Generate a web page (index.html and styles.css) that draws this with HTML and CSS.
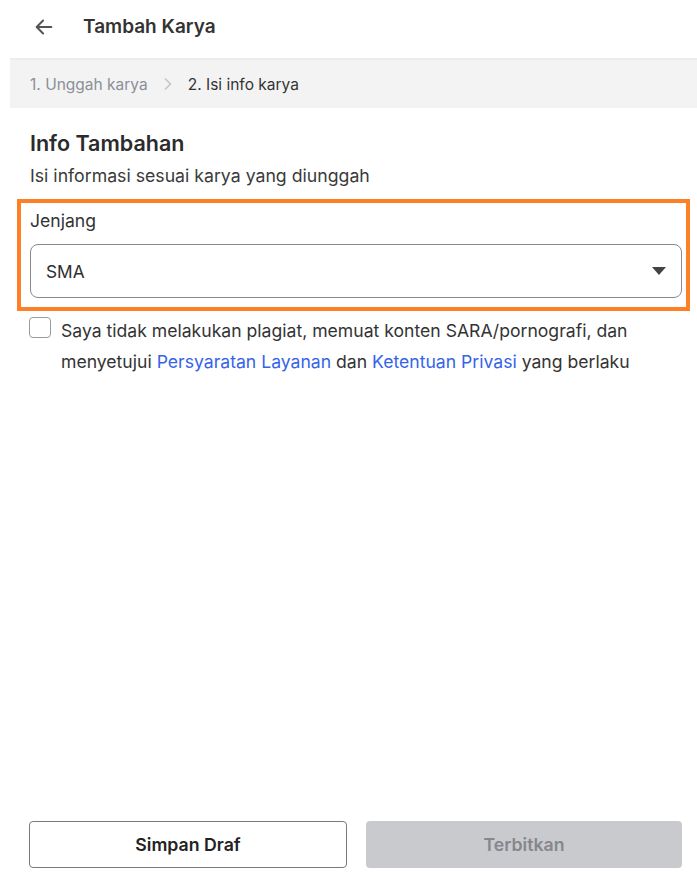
FILE: index.html
```html
<!DOCTYPE html>
<html>
  <head>
    <title>Tambah Karya</title>
    <meta http-equiv="content-type" content="text/html;charset=utf-8">
    <link rel="stylesheet" href="styles.css">
  </head>
  <body>
    <div class="page">
      <div class="topbar">
        <span class="back">
          <svg width="22" height="22" viewBox="0 0 24 24"><path d="M20 12H4.5M11 5l-7 7 7 7" fill="none" stroke="#555" stroke-width="2.2" stroke-linecap="round" stroke-linejoin="round"/></svg>
        </span>
        <h1>Tambah Karya</h1>
      </div>
      <div class="steps">
        <span class="step done">1. Unggah karya</span>
        <svg class="chev" width="10" height="14" viewBox="0 0 10 14"><path d="M2 1.5l5.5 5.5L2 12.5" fill="none" stroke="#c4c6cb" stroke-width="1.6"/></svg>
        <span class="step">2. Isi info karya</span>
      </div>
      <div class="content">
        <h2>Info Tambahan</h2>
        <p class="hint">Isi informasi sesuai karya yang diunggah</p>
        <div class="highlight">
          <label class="label">Jenjang</label>
          <div class="select">
            <span>SMA</span>
            <svg width="14" height="8" viewBox="0 0 14 8"><path d="M0 0h14L7 8z" fill="#444"/></svg>
          </div>
        </div>
        <div class="agree">
          <span class="box"></span>
          <p>Saya tidak melakukan plagiat, memuat konten SARA/pornografi, dan menyetujui <a href="#">Persyaratan Layanan</a> dan <a href="#">Ketentuan Privasi</a> yang berlaku</p>
        </div>
      </div>
      <div class="actions">
        <button class="btn outline">Simpan Draf</button>
        <button class="btn disabled">Terbitkan</button>
      </div>
    </div>
  </body>
</html>
```

FILE: styles.css
```css
body {
  margin: 0;
  font-family: Inter, "Noto Sans", sans-serif;
  color: #2e2e2e;
  background: #fff;
}

.page {
  height: 879px;
  display: flex;
  flex-direction: column;
}

.topbar {
  height: 53px;
  padding-bottom: 5px;
  display: flex;
  align-items: center;
  padding-left: 33px;
  border-bottom: 2px solid #ececec;
  margin-left: 10px;
}

.topbar .back {
  display: flex;
  margin-left: -10px;
}

.topbar h1 {
  margin: 0 0 0 28px;
  font-size: 19px;
  font-weight: 600;
  color: #333;
}

.steps {
  margin-left: 10px;
  height: 48px;
  background: #f3f3f3;
  display: flex;
  align-items: center;
  padding-left: 20px;
  font-size: 15.5px;
}

.step {
  color: #333;
}

.step.done {
  color: #8b8f98;
}

.chev {
  margin: 0 15px 0 15px;
}

.content {
  padding: 0 7px 0 17px;
  flex: 1;
}

h2 {
  margin: 21px 0 0 13px;
  font-size: 21.5px;
  font-weight: 600;
  line-height: 28px;
  color: #2b2b2b;
}

.hint {
  margin: 7px 0 0 13px;
  font-size: 17.7px;
  line-height: 24px;
  color: #3a3a3a;
}

.highlight {
  margin-top: 11px;
  border: 4px solid #ff7f27;
  padding: 6px 4px 9px 9px;
}

.label {
  display: block;
  font-size: 17.6px;
  line-height: 24px;
  color: #333;
}

.select {
  margin-top: 11px;
  height: 52px;
  border: 1px solid #8a8a8a;
  border-radius: 8px;
  display: flex;
  align-items: center;
  justify-content: space-between;
  padding: 0 15px;
  font-size: 17.3px;
}

.agree {
  display: flex;
  align-items: flex-start;
  margin-top: 5px;
  padding-left: 12px;
}

.agree .box {
  flex: none;
  width: 20px;
  height: 19px;
  border: 1.5px solid #9a9a9a;
  border-radius: 4px;
  margin-top: 1px;
}

.agree p {
  margin: -1px 0 0 10px;
  font-size: 17.6px;
  line-height: 31px;
  color: #333;
}

.agree a {
  color: #3563e9;
  text-decoration: none;
}

.actions {
  display: flex;
  gap: 19px;
  padding: 0 15px 11px 29px;
}

.btn {
  flex: 1;
  height: 47px;
  border-radius: 4px;
  font-family: inherit;
  font-size: 17.7px;
  font-weight: 600;
}

.btn.outline {
  background: #fff;
  border: 1px solid #7a7a7a;
  color: #222;
}

.btn.disabled {
  background: #c9cace;
  border: 0;
  color: #85878c;
}
```
